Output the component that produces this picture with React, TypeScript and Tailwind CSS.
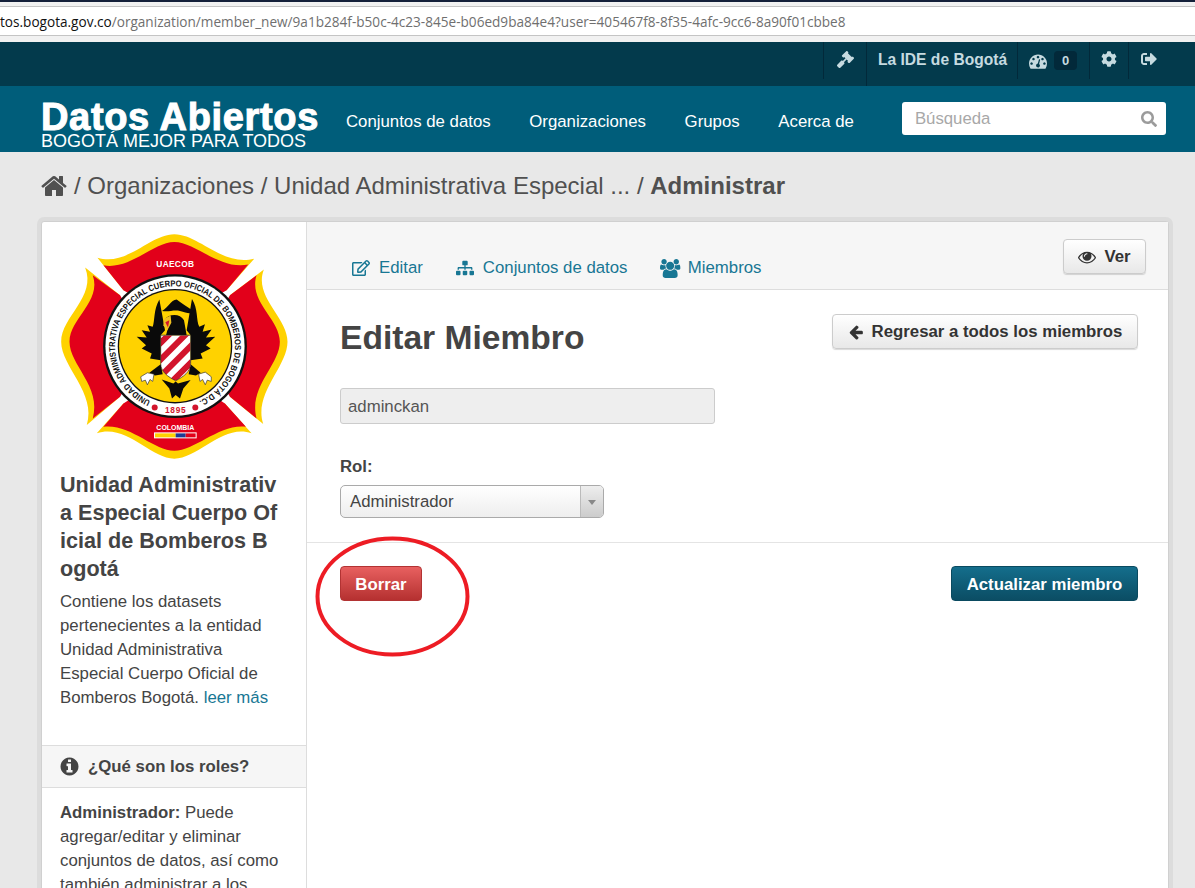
import { FaCog, FaGavel, FaRegEdit, FaSearch, FaSignOutAlt, FaSitemap } from 'react-icons/fa';

const NAV = ['Conjuntos de datos', 'Organizaciones', 'Grupos', 'Acerca de'];

// Font Awesome 4 glyphs, the react-icons set only has the newer drawings
const HOME = 'M1472 992v480q0 26-19 45t-45 19h-384v-384h-256v384h-384q-26 0-45-19t-19-45v-480q0-1 .5-3t.5-3l575-474 575 474q1 2 1 6zm223-69l-62 74q-8 9-21 11h-3q-13 0-21-7l-692-577-692 577q-12 8-24 7-13-2-21-11l-62-74q-8-10-7-23.5t11-21.5l719-599q32-26 76-26t76 26l244 204v-195q0-14 9-23t23-9h192q14 0 23 9t9 23v408l219 182q10 8 11 21.5t-7 23.5z';
const DASHBOARD = 'M384 1152q0-53-37.5-90.5t-90.5-37.5-90.5 37.5-37.5 90.5 37.5 90.5 90.5 37.5 90.5-37.5 37.5-90.5zm192-448q0-53-37.5-90.5t-90.5-37.5-90.5 37.5-37.5 90.5 37.5 90.5 90.5 37.5 90.5-37.5 37.5-90.5zm428 481l101-382q6-26-7.5-48.5t-38.5-29.5-48 6.5-30 39.5l-101 382q-60 5-107 43.5t-63 98.5q-20 77 20 146t117 89 146-20 89-117q16-60-6-117t-72-91zm660-33q0-53-37.5-90.5t-90.5-37.5-90.5 37.5-37.5 90.5 37.5 90.5 90.5 37.5 90.5-37.5 37.5-90.5zm-640-640q0-53-37.5-90.5t-90.5-37.5-90.5 37.5-37.5 90.5 37.5 90.5 90.5 37.5 90.5-37.5 37.5-90.5zm448 192q0-53-37.5-90.5t-90.5-37.5-90.5 37.5-37.5 90.5 37.5 90.5 90.5 37.5 90.5-37.5 37.5-90.5zm320 448q0 261-141 483-19 29-54 29h-1402q-35 0-54-29-141-221-141-483 0-182 71-348t191-286 286-191 348-71 348 71 286 191 191 286 71 348z';
const USERS = 'M593 896q-162 5-265 128h-134q-82 0-138-40.5t-56-118.5q0-353 124-353 6 0 43.5 21t97.5 42.5 119 21.5q67 0 133-23-5 37-5 66 0 139 81 256zm1071 637q0 120-73 189.5t-194 69.5h-874q-121 0-194-69.5t-73-189.5q0-53 3.5-103.5t14-109 26.5-108.5 43-97.5 62-81 85.5-53.5 111.5-20q10 0 43 21.5t73 48 107 48 135 21.5 135-21.5 107-48 73-48 43-21.5q61 0 111.5 20t85.5 53.5 62 81 43 97.5 26.5 108.5 14 109 3.5 103.5zm-1024-1277q0 106-75 181t-181 75-181-75-75-181 75-181 181-75 181 75 75 181zm704 384q0 159-112.5 271.5t-271.5 112.5-271.5-112.5-112.5-271.5 112.5-271.5 271.5-112.5 271.5 112.5 112.5 271.5zm576 225q0 78-56 118.5t-138 40.5h-134q-103-123-265-128 81-117 81-256 0-29-5-66 66 23 133 23 59 0 119-21.5t97.5-42.5 43.5-21q124 0 124 353zm-128-609q0 106-75 181t-181 75-181-75-75-181 75-181 181-75 181 75 75 181z';
const EYE = 'M1664 960q-152-236-381-353 61 104 61 225 0 185-131.5 316.5t-316.5 131.5-316.5-131.5-131.5-316.5q0-121 61-225-229 117-381 353 133 205 333.5 326.5t434.5 121.5 434.5-121.5 333.5-326.5zm-720-384q0-20-14-34t-34-14q-125 0-214.5 89.5t-89.5 214.5q0 20 14 34t34 14 34-14 14-34q0-86 61-147t147-61q20 0 34-14t14-34zm848 384q0 34-20 69-140 230-376.5 368.5t-499.5 138.5-499.5-139-376.5-368q-20-35-20-69t20-69q140-229 376.5-368t499.5-139 499.5 139 376.5 368q20 35 20 69z';
const ARROW_LEFT = 'M1664 896v128q0 53-32.5 90.5t-84.5 37.5h-704l293 294q38 36 38 90t-38 90l-75 76q-37 37-90 37-52 0-91-37l-651-652q-37-37-37-90 0-52 37-91l651-650q38-38 91-38 52 0 90 38l75 74q38 38 38 91t-38 91l-293 293h704q52 0 84.5 37.5t32.5 90.5z';
const INFO = 'M1152 1376v-160q0-14-9-23t-23-9h-96v-512q0-14-9-23t-23-9h-320q-14 0-23 9t-9 23v160q0 14 9 23t23 9h96v320h-96q-14 0-23 9t-9 23v160q0 14 9 23t23 9h448q14 0 23-9t9-23zm-128-896v-160q0-14-9-23t-23-9h-192q-14 0-23 9t-9 23v160q0 14 9 23t23 9h192q14 0 23-9t9-23zm640 416q0 209-103 385.5t-279.5 279.5-385.5 103-385.5-103-279.5-279.5-103-385.5 103-385.5 279.5-279.5 385.5-103 385.5 103 279.5 279.5 103 385.5z';

function Fa({ d, size, w = 1792, className }: { d: string; size: number; w?: number; className?: string }) {
  return (
    <svg viewBox={`0 0 ${w} 1792`} width={(size * w) / 1792} height={size} fill="currentColor" className={className}>
      <path d={d} />
    </svg>
  );
}

function Crest() {
  return (
    <svg viewBox="60 38 690 682" className="h-[227px] w-[230px] shrink-0">
      <defs>
        <clipPath id="shield">
          <path d="M362 345H452V430C452 455 430 470 407 482C384 470 362 455 362 430Z" />
        </clipPath>
        <path id="ring" d="M405 558A180 180 0 1 1 405.1 558" />
      </defs>
      {/* yellow edge */}
      <path fill="#ffd200" d="M172 112C260 140 330 42 403 42C476 42 550 140 643 115L560 210H250Z" />
      <path fill="#ffd200" d="M672 148C640 230 743 290 743 365C743 440 640 520 670 612L570 530V225Z" />
      <path fill="#ffd200" d="M170 640C260 610 330 716 403 716C476 716 550 610 635 640L555 550H250Z" />
      <path fill="#ffd200" d="M135 142C170 230 63 290 63 365C63 440 170 520 140 615L240 530V225Z" />
      {/* red quarters */}
      <path fill="#e2001a" d="M190 135C270 150 340 65 403 65C466 65 540 150 625 133L560 210L405 300L250 210Z" />
      <path fill="#e2001a" d="M650 165C625 245 720 295 720 365C720 435 625 500 650 595L570 530L480 378L570 225Z" />
      <path fill="#e2001a" d="M190 620C270 610 340 692 403 692C466 692 540 610 618 620L555 550L405 450L250 550Z" />
      <path fill="#e2001a" d="M158 165C185 245 88 295 88 365C88 435 185 500 158 595L240 530L330 378L240 225Z" />
      {/* seal */}
      <circle cx="405" cy="378" r="216" fill="#111" />
      <circle cx="405" cy="378" r="209" fill="#fff" />
      <circle cx="405" cy="378" r="172" fill="#111" />
      <circle cx="405" cy="378" r="168" fill="#ffd200" />
      <text fill="#111" fontFamily="Liberation Sans, sans-serif" fontSize="26" fontWeight="700">
        <textPath href="#ring" startOffset="6.7%" textLength="980" lengthAdjust="spacingAndGlyphs">UNIDAD ADMINISTRATIVA ESPECIAL CUERPO OFICIAL DE BOMBEROS DE BOGOTÁ D.C.</textPath>
      </text>
      <text x="407" y="579" textAnchor="middle" fill="#d2142c" fontFamily="Liberation Sans, sans-serif" fontSize="25" fontWeight="700" letterSpacing="2">1895</text>
      <circle cx="344" cy="562" r="9" fill="#d2142c" />
      <circle cx="466" cy="562" r="9" fill="#d2142c" />
      <text x="406" y="141" textAnchor="middle" fill="#fff" fontFamily="Liberation Sans, sans-serif" fontSize="25" fontWeight="700" letterSpacing="1">UAECOB</text>
      <text x="406" y="631" textAnchor="middle" fill="#fff" fontFamily="Liberation Sans, sans-serif" fontSize="21" fontWeight="700">COLOMBIA</text>
      <rect x="342" y="637" width="128" height="18" fill="#fff" />
      <rect x="345" y="640" width="62" height="12" fill="#ffd200" />
      <rect x="407" y="640" width="30" height="12" fill="#1f3a93" />
      <rect x="437" y="640" width="30" height="12" fill="#e2001a" />
      {/* eagle */}
      <path fill="#0a0a0a" d="M358 238C340 270 345 300 338 320L322 315L330 335L305 330L320 352L290 350L318 375L305 385L335 400L330 415L362 420V345L375 330Z" />
      <path fill="#0a0a0a" d="M456 236C475 265 468 300 478 320L495 312L488 335L515 328L498 352L526 350L498 375L512 385L482 400L488 415L452 420V345L440 330Z" />
      <path fill="#0a0a0a" d="M372 300C385 280 420 278 432 300L440 345H378L385 320Z" />
      <path fill="#f0c020" d="M372 296L392 286L394 308L382 330L370 316Z" />
      <path fill="#d2142c" d="M376 306L388 300L384 322Z" />
      <path fill="#0a0a0a" d="M366 272C385 262 392 240 410 238C425 250 440 258 460 272C455 284 440 278 420 272C400 268 385 276 366 272Z" />
      <path fill="#0a0a0a" d="M365 478L400 490L407 484L414 490L452 480L430 505L420 535L407 525L396 535L388 505Z" />
      <path fill="#0a0a0a" d="M328 458L362 432L368 462L345 466Z" />
      <path fill="#0a0a0a" d="M482 458L452 432L446 462L468 466Z" />
      <path fill="#fff" stroke="#333" strokeWidth="2" d="M302 470L322 458L342 462L338 484L330 478L322 494L316 480L305 484Z" />
      <path fill="#fff" stroke="#333" strokeWidth="2" d="M514 470L496 456L476 462L480 484L488 478L496 494L502 480L514 484Z" />
      <g clipPath="url(#shield)">
        <rect x="355" y="340" width="105" height="150" fill="#fff" />
        <path stroke="#d2142c" strokeWidth="18" d="M330 400L400 330M340 440L450 330M350 480L480 350M385 495L490 390M425 505L490 440" />
      </g>
      <path fill="none" stroke="#222" strokeWidth="2" d="M362 345H452V430C452 455 430 470 407 482C384 470 362 455 362 430Z" />
    </svg>
  );
}

function App() {
  return (
    <div className="relative h-[888px] w-[1195px] overflow-hidden bg-[#e8e8e8] font-['Liberation_Sans',sans-serif] text-[16.8px] leading-[24px] text-[#444]">
      {/* browser address bar */}
      <div className="h-[42px] bg-[#f1f1f1]">
        <div className="h-[2px] bg-[#14203a]" />
        <div className="h-[4px]" />
        <div className="flex h-[30px] items-center overflow-hidden border-y border-[#c4c4c4] bg-white pt-[1px] font-['Open_Sans',sans-serif] text-[13.6px] whitespace-nowrap text-[#6f6f6f]">
          <span className="text-[#111]">tos.bogota.gov.co</span>
          <span>/organization/member_new/9a1b284f-b50c-4c23-845e-b06ed9ba84e4?user=405467f8-8f35-4afc-9cc6-8a90f01cbbe8</span>
        </div>
      </div>

      {/* account bar */}
      <div className="flex h-[44px] items-start justify-end bg-[#033a4c] pr-[27px] text-[#c6dae0]">
        <div className="flex h-[37px] w-[43px] items-center justify-center border-l border-[#02293a]">
          <FaGavel size={17} className="mb-[3px]" />
        </div>
        <div className="flex h-[44px] w-[151px] border-l border-[#02293a] pt-[6px] pl-[11px] text-[15.6px] font-bold">La IDE de Bogotá</div>
        <div className="flex h-[37px] w-[72px] items-center gap-[7px] border-l border-[#02293a] pl-[11px]">
          <Fa d={DASHBOARD} size={18} />
          <span className="flex h-[19px] w-[23px] items-center justify-center rounded-[4px] bg-[#02293a] text-[13px] font-bold">0</span>
        </div>
        <div className="flex h-[37px] w-[39px] items-center justify-center border-l border-[#02293a]">
          <FaCog size={16} className="mb-[3px]" />
        </div>
        <div className="flex h-[37px] w-[40px] items-center justify-center border-l border-[#02293a]">
          <FaSignOutAlt size={16} className="mb-[3px]" />
        </div>
      </div>

      {/* masthead */}
      <div className="flex h-[66px] items-start bg-[#005d7a] pl-[41px] text-white">
        <div className="w-[305px] shrink-0 pt-[16px]">
          <div className="h-[30px] text-[38px] leading-[30px] font-bold tracking-[0.65px] whitespace-nowrap [-webkit-text-stroke:1px_white]">Datos Abiertos</div>
          <div className="text-[18px] leading-[19px] whitespace-nowrap">BOGOTÁ MEJOR PARA TODOS</div>
        </div>
        <div className="flex gap-[38.7px] pt-[24px] whitespace-nowrap">
          {NAV.map((item) => (
            <span key={item}>{item}</span>
          ))}
        </div>
        <div className="ml-[48px] mt-[16px] flex h-[33px] w-[264px] items-center justify-between rounded-[3px] bg-white pt-[1px] pr-[9px] pl-[13px] text-[#a8a8a8]">
          <span>Búsqueda</span>
          <FaSearch size={16} className="text-[#9b9b9b]" />
        </div>
      </div>

      {/* breadcrumb */}
      <div className="flex h-[69px] items-center gap-[6px] pb-[2px] pl-[40px] text-[24px] leading-[30px] whitespace-nowrap text-[#505050]">
        <Fa d={HOME} size={28} />
        <span>
          / Organizaciones / Unidad Administrativa Especial ... / <b>Administrar</b>
        </span>
      </div>

      {/* card */}
      <div className="ml-[41px] flex h-[700px] w-[1128px] rounded-[3px] border border-[#d0d0d0] bg-white shadow-[0_0_0_4px_rgba(0,0,0,0.05)]">
        <aside className="w-[265px] shrink-0 border-r border-[#ddd]">
          <div className="pt-[11px] pl-[18px]">
            <Crest />
          </div>
          <div className="pl-[18px] pr-[18px]">
            <h1 className="mt-[11px] text-[21.6px] leading-[28px] font-bold break-all text-[#444]">
              Unidad Administrativ<br />a Especial Cuerpo Of<br />icial de Bomberos B<br />ogotá
            </h1>
            <p className="mt-[7px]">
              Contiene los datasets pertenecientes a la entidad Unidad Administrativa Especial Cuerpo Oficial de Bomberos Bogotá. <span className="text-[#187794]">leer más</span>
            </p>
          </div>
          <div className="mt-[35px] flex h-[43px] items-center gap-[8.5px] border-y border-[#ddd] bg-[#f6f6f6] pl-[16.5px] font-bold">
            <Fa d={INFO} size={21} />
            <span>¿Qué son los roles?</span>
          </div>
          <p className="px-[18px] pt-[13px]">
            <b>Administrador:</b> Puede agregar/editar y eliminar conjuntos de datos, así como también administrar a los miembros
          </p>
        </aside>

        <main className="min-w-0 flex-1">
          <div className="flex h-[68px] items-start justify-between border-b border-[#ddd] bg-[#f6f6f6] pr-[22px] text-[#187794]">
            <div className="flex gap-[33px] pt-[34px] pl-[45px]">
              <span className="flex items-center gap-[9px]"><FaRegEdit size={18} />Editar</span>
              <span className="flex items-center gap-[9px]"><FaSitemap size={18} />Conjuntos de datos</span>
              <span className="flex items-center gap-[7px]"><Fa d={USERS} size={19} w={1920} />Miembros</span>
            </div>
            <button className="mt-[17px] flex h-[35px] w-[83px] items-center justify-center gap-[8px] rounded-[4px] border border-[#ccc] bg-gradient-to-b from-white to-[#e8e8e8] font-bold text-[#333] shadow-[0_1px_1px_rgba(0,0,0,0.15)]">
              <Fa d={EYE} size={18} />Ver
            </button>
          </div>

          <div className="pr-[30px] pl-[33px]">
            <div className="flex items-start justify-between pt-[24px]">
              <h2 className="text-[33.6px] leading-[48px] font-bold text-[#444]">Editar Miembro</h2>
              <button className="flex h-[35px] w-[306px] items-center justify-center gap-[8px] rounded-[4px] border border-[#ccc] bg-gradient-to-b from-white to-[#e8e8e8] font-bold text-[#333] shadow-[0_1px_1px_rgba(0,0,0,0.15)]">
                <Fa d={ARROW_LEFT} size={16} />Regresar a todos los miembros
              </button>
            </div>
            <input
              readOnly
              value="adminckan"
              className="mt-[26px] block h-[36px] w-[375px] rounded-[3px] border border-[#ccc] bg-[#eee] px-[7px] pt-[1px] text-[#555]"
            />
            <div className="mt-[31px] font-bold">Rol:</div>
            <div className="mt-[6px] flex h-[33px] w-[264px] overflow-hidden rounded-[5px] border border-[#aaa] bg-gradient-to-b from-white to-[#eee] text-[#444]">
              <span className="flex-1 pl-[9px] leading-[31px]">Administrador</span>
              <span className="flex w-[23px] items-center justify-center border-l border-[#bbb] bg-gradient-to-b from-[#eee] to-[#ccc]">
                <span className="mt-[1px] h-0 w-0 border-x-[4px] border-t-[5px] border-x-transparent border-t-[#888]" />
              </span>
            </div>
          </div>

          <div className="mt-[24px] flex justify-between border-t border-[#e4e4e4] pt-[23px] pr-[30px] pl-[33px]">
            <button className="h-[35px] w-[82px] rounded-[4px] border border-[#b23333] bg-gradient-to-b from-[#e86060] to-[#b53030] pt-[2px] font-bold text-white">Borrar</button>
            <button className="h-[35px] w-[187px] rounded-[4px] border border-[#0a4a60] bg-gradient-to-b from-[#146e8c] to-[#0b4d64] pt-[2px] font-bold text-white">Actualizar miembro</button>
          </div>
        </main>
      </div>

      {/* hand drawn annotation */}
      <svg className="pointer-events-none absolute top-[535px] left-[314px]" width="158" height="124" viewBox="0 0 158 124">
        <ellipse cx="78.5" cy="61.5" rx="75" ry="58" fill="none" stroke="#ed1c24" strokeWidth="4" />
      </svg>
    </div>
  );
}

export default App;
